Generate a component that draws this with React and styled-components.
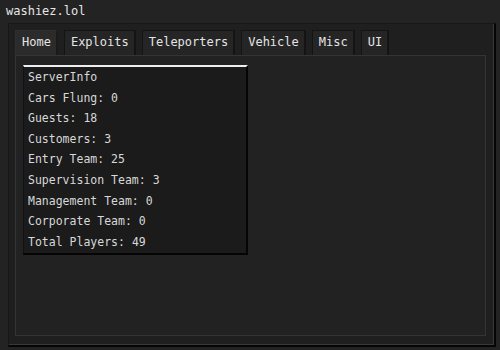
import React, { useState } from 'react'
import styled, { createGlobalStyle } from 'styled-components'

const Global = createGlobalStyle`
  html, body {
    margin: 0;
    padding: 0;
    background: #232323;
  }
  body {
    width: 500px;
    height: 350px;
    overflow: hidden;
    font-family: "DejaVu Sans Mono", "Liberation Mono", monospace;
    color: #dcdcdc;
  }
`

const Title = styled.div`
  height: 23px;
  padding: 0 6px;
  font-size: 12px;
  line-height: 23px;
  color: #e6e6e6;
`

const Frame = styled.div`
  box-sizing: border-box;
  width: 488px;
  height: 324px;
  margin-left: 8px;
  display: flex;
  flex-direction: column;
  background: #1f1f1f;
  border-top: 1px solid #171717;
  border-left: 1px solid #171717;
  border-right: 2px solid #050505;
  border-bottom: 2px solid #050505;
  box-shadow: inset -1px -1px 0 #383838;
  padding: 6px 8px 9px 6px;
`

const TabBar = styled.div`
  display: flex;
  gap: 6px;
  height: 25px;
`

const Tab = styled.div`
  box-sizing: border-box;
  height: 25px;
  padding: 0 5px 0 6px;
  font-size: 12px;
  line-height: 23px;
  color: #e4e4e4;
  background: ${p => (p.$active ? '#2b2b2b' : '#252525')};
  border: 1px solid ${p => (p.$active ? '#2f2f2f' : '#141414')};
  border-right: 2px solid ${p => (p.$active ? '#1a1a1a' : '#141414')};
  border-bottom: none;
  cursor: default;
`

const Panel = styled.div`
  flex: 1;
  background: #222222;
  border: 1px solid #343434;
  padding: 9px 7px;
`

const Card = styled.div`
  box-sizing: border-box;
  width: 225px;
  background: #1b1b1b;
  border-top: 2px solid #eeeeee;
  border-left: 1px solid #111111;
  border-right: 2px solid #050505;
  border-bottom: 2px solid #050505;
  padding: 0 4px 1px 4px;
`

const Line = styled.div`
  font-size: 11.5px;
  line-height: 20.6px;
  color: #d8d8d8;
  white-space: pre;
`

const tabs = ['Home', 'Exploits', 'Teleporters', 'Vehicle', 'Misc', 'UI']

const stats = [
  ['Cars Flung', 0],
  ['Guests', 18],
  ['Customers', 3],
  ['Entry Team', 25],
  ['Supervision Team', 3],
  ['Management Team', 0],
  ['Corporate Team', 0],
  ['Total Players', 49],
]

export default function App() {
  const [active, setActive] = useState('Home')
  return (
    <>
      <Global />
      <Title>washiez.lol</Title>
      <Frame>
        <TabBar>
          {tabs.map(t => (
            <Tab key={t} $active={t === active} onClick={() => setActive(t)}>
              {t}
            </Tab>
          ))}
        </TabBar>
        <Panel>
          {active === 'Home' && (
            <Card>
              <Line>ServerInfo</Line>
              {stats.map(([k, v]) => (
                <Line key={k}>{k}: {v}</Line>
              ))}
            </Card>
          )}
        </Panel>
      </Frame>
    </>
  )
}
